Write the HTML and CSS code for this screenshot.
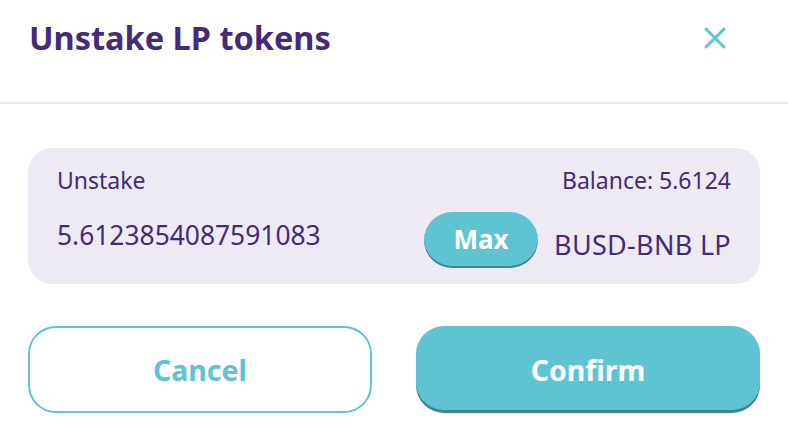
FILE: index.html
```html
<!DOCTYPE html>
<html lang="en">
<head>
<meta charset="utf-8">
<title>Unstake LP tokens</title>
<link rel="stylesheet" href="styles.css">
</head>
<body>
<div class="modal">
  <div class="header">
    <h2 class="title">Unstake LP tokens</h2>
    <button class="close" aria-label="Close">
      <svg width="22" height="22" viewBox="0 0 22 22"><path d="M2 2L20 20M20 2L2 20" stroke="#5fc4d2" stroke-width="3" stroke-linecap="round"/></svg>
    </button>
  </div>
  <div class="body">
    <div class="panel">
      <div class="row top">
        <span class="label">Unstake</span>
        <span class="label">Balance: 5.6124</span>
      </div>
      <div class="row bottom">
        <span class="amount">5.6123854087591083</span>
        <div class="right">
          <button class="max">Max</button>
          <span class="token">BUSD-BNB LP</span>
        </div>
      </div>
    </div>
    <div class="actions">
      <button class="btn outline">Cancel</button>
      <button class="btn primary">Confirm</button>
    </div>
  </div>
</div>
</body>
</html>
```
FILE: styles.css
```css
* { box-sizing: border-box; }
body {
  margin: 0;
  background: #fff;
  font-family: "Noto Sans", "Open Sans", sans-serif;
  color: #452a7a;
}
.header {
  display: flex;
  align-items: center;
  justify-content: space-between;
  padding: 14px 49px 40px 29px;
  border-bottom: 2px solid #e9eaeb;
}
.title {
  margin: 0;
  font-size: 32.5px;
  line-height: 48px;
  font-weight: 700;
  color: #452a7a;
}
.close {
  width: 48px;
  height: 48px;
  border: 0;
  background: none;
  padding: 0;
  display: flex;
  align-items: center;
  justify-content: center;
}
.body {
  padding: 44px 28px 0;
}
.panel {
  background: #eeeaf4;
  border-radius: 24px;
  padding: 18px 29px 16px;
  height: 136px;
}
.row {
  display: flex;
  justify-content: space-between;
  align-items: center;
}
.label {
  font-size: 23px;
  line-height: 28px;
}
.bottom {
  margin-top: 18px;
}
.amount {
  font-size: 26.4px;
  line-height: 32px;
  margin-bottom: 10px;
}
.right {
  display: flex;
  align-items: center;
  gap: 16px;
}
.max {
  width: 114px;
  height: 56px;
  border: 0;
  border-radius: 28px;
  background: #5fc4d2;
  box-shadow: inset 0 -2px 0 rgba(14, 14, 44, 0.35);
  color: #fff;
  font-family: inherit;
  font-weight: 700;
  font-size: 26px;
  padding: 0 0 2px;
}
.token {
  font-size: 27px;
  line-height: 32px;
  letter-spacing: 0.3px;
  margin-top: 10px;
}
.actions {
  display: grid;
  grid-template-columns: 1fr 1fr;
  gap: 44px;
  margin-top: 42px;
}
.btn {
  height: 87px;
  border-radius: 28px;
  font-family: inherit;
  font-weight: 700;
  font-size: 28.5px;
}
.outline {
  background: #fff;
  border: 2px solid #5fc4d2;
  color: #5fc4d2;
}
.primary {
  background: #5fc4d2;
  border: 0;
  color: #fff;
  box-shadow: inset 0 -3px 0 rgba(14, 14, 44, 0.35);
}
```
